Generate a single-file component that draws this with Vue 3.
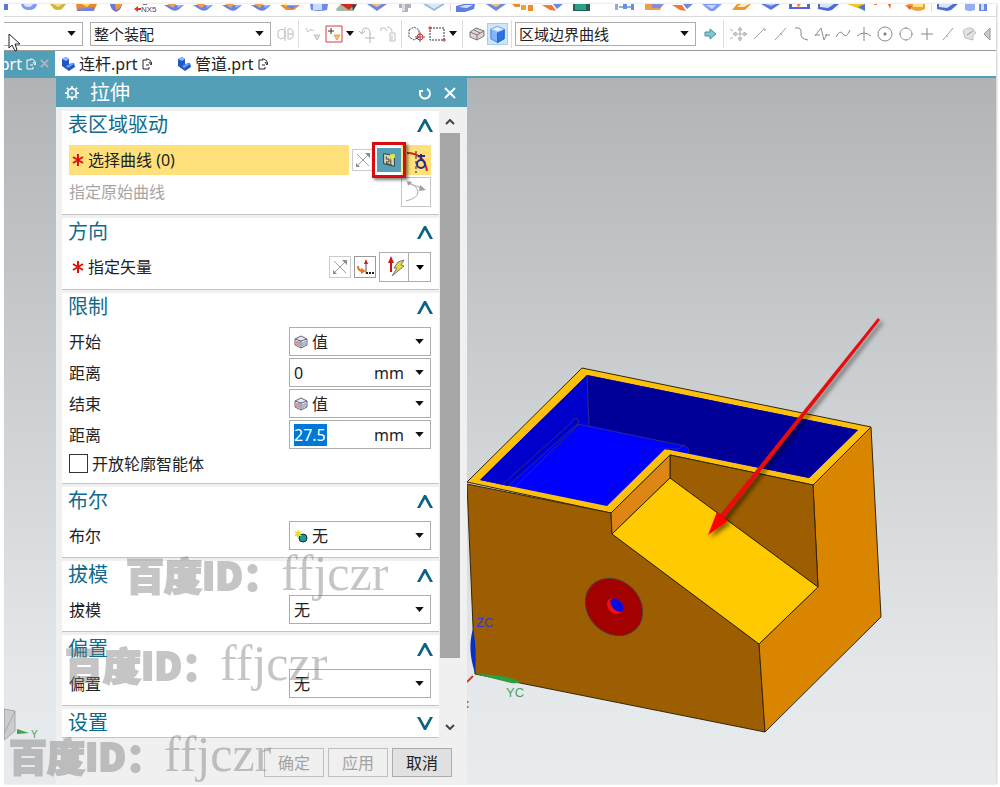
<template>
  <div class="app">
    <div class="ribbon">
      <template v-for="(icon, i) in ribbon" :key="i">
        <span v-if="icon === 'sep'" class="ribbon-sep"></span>
        <span v-else-if="icon === 'gap'" class="ribbon-gap"></span>
        <svg v-else class="ribbon-icon" :class="{ first: i === 0 }" viewBox="0 0 29 12" preserveAspectRatio="xMinYMin slice">
          <path v-for="(p, k) in ribbonShapes[icon]" :key="k" :d="p[0]" :fill="p[1]" />
          <text v-if="icon === 'nx'" x="11" y="8" class="nx-text">NX5</text>
        </svg>
      </template>
    </div>

    <div class="toolbar">
      <div class="combo filter cut">
        <select aria-label="过滤器"><option></option></select>
        <svg class="caret" viewBox="0 0 10 6"><path d="M0 0h10l-5 6z" /></svg>
      </div>
      <div class="combo filter wide">
        <select v-model="scope" aria-label="选择范围"><option>整个装配</option></select>
        <svg class="caret" viewBox="0 0 10 6"><path d="M0 0h10l-5 6z" /></svg>
      </div>
      <template v-for="(t, i) in selectTools" :key="i">
        <span v-if="t === 'sep'" class="tool-sep"></span>
        <button v-else-if="t === 'caret'" class="tool caret-btn" aria-label="更多">
          <svg viewBox="0 0 8 5"><path d="M0 0h8l-4 5z" fill="#111" /></svg>
        </button>
        <button v-else class="tool" :class="{ active: t === 'shaded' }" :aria-label="t">
          <svg viewBox="0 0 20 20">
            <path v-for="(p, k) in toolShapes[t]" :key="k" :d="p[0]" :stroke="p[1]" :fill="p[2] || 'none'" :stroke-dasharray="p[3]" />
          </svg>
        </button>
      </template>
      <div class="combo filter wide">
        <select v-model="curveRule" aria-label="曲线规则"><option>区域边界曲线</option></select>
        <svg class="caret" viewBox="0 0 10 6"><path d="M0 0h10l-5 6z" /></svg>
      </div>
      <template v-for="(t, i) in snapTools" :key="i">
        <span v-if="t === 'sep'" class="tool-sep"></span>
        <button v-else class="tool" :aria-label="t">
          <svg viewBox="0 0 20 20">
            <path v-for="(p, k) in toolShapes[t]" :key="k" :d="p[0]" :stroke="p[1]" :fill="p[2] || 'none'" />
          </svg>
        </button>
      </template>
    </div>

    <nav class="tabs">
      <a href="#" class="tab current">
        <span>prt</span>
        <svg class="edit" viewBox="0 0 10 12"><path d="M5 2H1v9h6V9" /><path d="M4 1q5 0 5 4M7 4l2 3 1-3M4 7h3" /></svg>
        <svg class="close" viewBox="0 0 10 10"><path d="M1 1l8 8M9 1l-8 8" /></svg>
      </a>
      <a v-for="name in parts" :key="name" href="#" class="tab">
        <svg class="part" viewBox="0 0 14 14">
          <path d="M1 2l4-2 3 2v5l5-1 1 4-6 4-7-5z" fill="#1d57c8" />
          <path d="M1 2l4-2 3 2-3 2z" fill="#8fb9ff" />
          <path d="M5 9l6-3 2 1-6 4z" fill="#6ea0f6" />
        </svg>
        <span>{{ name }}</span>
        <svg class="edit" viewBox="0 0 10 12"><path d="M5 2H1v9h6V9" /><path d="M4 1q5 0 5 4M7 4l2 3 1-3M4 7h3" /></svg>
      </a>
    </nav>

    <main class="workspace">
      <div class="side">
        <svg viewBox="0 0 52 80">
          <path d="M0 5l11 2v20L0 36z" fill="#c9cdd0" stroke="#a3a7aa" />
          <path d="M0 30L11 7M0 5v31" stroke="#a3a7aa" fill="none" />
          <path d="M13 25l12 4-12 1z" fill="#3fa34a" />
          <text x="27" y="34" class="axis green small">Y</text>
        </svg>
      </div>

      <section class="dialog">
        <header class="title-bar">
          <svg class="gear" viewBox="0 0 16 16">
            <circle cx="8" cy="8" r="5" fill="none" stroke="#fff" stroke-width="2" />
            <circle cx="8" cy="8" r="1" fill="#fff" />
            <path d="M8 0v3M8 13v3M0 8h3M13 8h3M2 2l2 2M12 12l2 2M14 2l-2 2M4 12l-2 2" stroke="#fff" stroke-width="2" />
          </svg>
          <h1>拉伸</h1>
          <button aria-label="重置">
            <svg viewBox="0 0 14 14"><path d="M2 5v2a5 5 0 1 0 7-4M1 5h4" /></svg>
          </button>
          <button aria-label="关闭">
            <svg viewBox="0 0 14 14"><path d="M2 2l10 10M12 2L2 12" /></svg>
          </button>
        </header>

        <div class="content">
          <div class="groups">
            <div v-for="g in groups" :key="g.title" class="group">
              <button class="group-head" @click="g.open = !g.open">
                <span>{{ g.title }}</span>
                <svg :class="{ down: !g.open }" viewBox="0 0 16 13"><path d="M0 13L7 0h2l7 13h-3L8 4 3 13z" /></svg>
              </button>

              <div v-if="g.open" class="group-body">
                <template v-if="g.kind === 'section'">
                  <div class="row tall">
                    <span class="required-label lit">
                      <svg class="star" viewBox="0 0 12 12"><path d="M6 0v12M1 3l10 6M11 3L1 9" /></svg>
                      选择曲线 (0)
                    </span>
                    <button class="mini plain" aria-label="反向"><svg viewBox="0 0 20 20"><path d="M4 4l12 12M16 4L4 16" stroke="#a0a0a0" fill="none" /><path d="M17 3v5l-5-5zM3 17v-4l4 4z" fill="#8c8c8c" /></svg></button>
                    <div class="pair">
                      <button class="sketch" aria-label="绘制截面">
                        <svg viewBox="0 0 20 20">
                          <path d="M4 3l12 2v12L4 14z" fill="#d8d6b0" stroke="#333" />
                          <path d="M7 6v3h3v3H7M12 8v6M7 12v2l6 1" fill="none" stroke="#333" />
                          <path d="M11 4l5-1 1 4-5 3z" fill="#e3e83e" />
                        </svg>
                      </button>
                      <button class="curve lit" aria-label="曲线">
                        <svg viewBox="0 0 28 28">
                          <path d="M5 7q17 0 20 18" fill="none" stroke="#d32020" stroke-width="2" />
                          <path d="M14 5v22" stroke="#222" stroke-dasharray="3 2" />
                          <circle cx="19" cy="18" r="4" fill="none" stroke="#2b2b8c" stroke-width="2" />
                          <path d="M19 8v7M16 10h7" stroke="#2b2b8c" stroke-width="2" />
                        </svg>
                      </button>
                    </div>
                  </div>
                  <div class="row tall">
                    <span class="label muted">指定原始曲线</span>
                    <button class="curve framed" aria-label="原始曲线">
                      <svg viewBox="0 0 28 28">
                        <path d="M4 23q12-3 12-9Q15 7 6 5M6 5l16 6" fill="none" stroke="#b3a8a8" />
                        <path d="M18 7l6 5-7 1z" fill="#a89c9c" />
                        <path d="M5 3l5 1-4 4z" fill="#a89c9c" />
                      </svg>
                    </button>
                  </div>
                </template>

                <div v-else-if="g.kind === 'direction'" class="row tall">
                  <span class="required-label">
                    <svg class="star" viewBox="0 0 12 12"><path d="M6 0v12M1 3l10 6M11 3L1 9" /></svg>
                    指定矢量
                  </span>
                  <button class="mini plain" aria-label="反向"><svg viewBox="0 0 20 20"><path d="M4 4l12 12M16 4L4 16" stroke="#a0a0a0" fill="none" /><path d="M17 3v5l-5-5zM3 17v-4l4 4z" fill="#8c8c8c" /></svg></button>
                  <button class="mini" aria-label="矢量对话框">
                    <svg viewBox="0 0 20 20">
                      <path d="M11 16V5" stroke="#555" fill="none" />
                      <path d="M9 7l2-5 2 5z" fill="#d81818" />
                      <path d="M3 9q0 5 5 5" fill="none" stroke="#e9751e" stroke-width="2" />
                      <path d="M6 11l5 3-5 3z" fill="#e9751e" />
                      <path d="M11 16h2M14 16h2M17 16h2" stroke="#222" stroke-width="2" />
                    </svg>
                  </button>
                  <div class="split">
                    <button aria-label="自动判断的矢量">
                      <svg viewBox="0 0 28 28">
                        <path d="M11 19V8" stroke="#d01212" stroke-width="2" />
                        <path d="M8 10l3-7 3 7z" fill="#d01212" />
                        <path d="M18 9l6-2-3 5 3 1-12 10 5-8-3 0z" fill="#e6da3c" stroke="#777" />
                      </svg>
                    </button>
                    <button aria-label="矢量类型"><svg class="arrow" viewBox="0 0 8 5"><path d="M0 0h8l-4 5z" /></svg></button>
                  </div>
                </div>

                <template v-else-if="g.kind === 'limits'">
                  <template v-for="l in limits" :key="l.id">
                    <div class="row">
                      <label class="label" :for="l.id">{{ l.name }}</label>
                      <div class="combo with-icon">
                        <select :id="l.id" v-model="l.type"><option>值</option></select>
                        <svg class="combo-icon" viewBox="0 0 14 14">
                          <path d="M1 4l6-3 6 3v6l-6 3-6-3z" fill="#e6e9f2" stroke="#667" />
                          <path d="M1 4l6 2 6-2M7 6v7" fill="none" stroke="#667" />
                          <path d="M3 6v4M5 6v5" stroke="#d24545" />
                          <path d="M9 7v4M11 6v4" stroke="#6f86c9" />
                        </svg>
                        <svg class="caret" viewBox="0 0 10 6"><path d="M0 0h10l-5 6z" /></svg>
                      </div>
                    </div>
                    <div class="row">
                      <label class="label" :for="l.id + '-dist'">距离</label>
                      <div class="measure">
                        <input :id="l.id + '-dist'" v-model="l.distance" type="text" :class="{ picked: l.picked }" />
                        <div class="combo unit">
                          <select v-model="l.unit" aria-label="单位"><option>mm</option></select>
                          <svg class="caret" viewBox="0 0 10 6"><path d="M0 0h10l-5 6z" /></svg>
                        </div>
                      </div>
                    </div>
                  </template>
                  <label class="check"><input v-model="openProfile" type="checkbox" />开放轮廓智能体</label>
                </template>

                <div v-else class="row">
                  <label class="label" :for="g.kind">{{ g.title }}</label>
                  <div class="combo" :class="{ 'with-icon': g.kind === 'boolean' }">
                    <select :id="g.kind" v-model="g.value"><option>无</option></select>
                    <svg v-if="g.kind === 'boolean'" class="combo-icon" viewBox="0 0 14 14">
                      <circle cx="9" cy="9" r="4" fill="#19a08c" stroke="#124" />
                      <path d="M4 0l1 3 3-1-2 3 2 2-3 0-1 3-1-3-3 0 2-2-2-3 3 1z" fill="#e8e020" />
                    </svg>
                    <svg class="caret" viewBox="0 0 10 6"><path d="M0 0h10l-5 6z" /></svg>
                  </div>
                </div>
              </div>
            </div>
          </div>

          <div class="scroll">
            <svg viewBox="0 0 10 6"><path d="M1 5l4-4 4 4" /></svg>
            <div class="track"><div class="thumb"></div></div>
            <svg viewBox="0 0 10 6"><path d="M1 1l4 4 4-4" /></svg>
          </div>
        </div>

        <footer class="actions">
          <button disabled>确定</button>
          <button disabled>应用</button>
          <button class="cancel">取消</button>
        </footer>
      </section>

      <div class="scene">
        <svg viewBox="467 78 529 706">
          <defs>
            <filter id="shade" x="-20%" y="-20%" width="140%" height="140%">
              <feDropShadow dx="3" dy="3" stdDeviation="2" flood-opacity=".5" />
            </filter>
          </defs>
          <g stroke="#33260a" stroke-width="1" stroke-linejoin="round">
            <path d="M467 482L582 368 871 427 813 485 670 455 611 513z" fill="#fdc00c" />
            <path d="M467 484L611 513 612 534 759 644 765 732 475 674z" fill="#9c5e00" />
            <path d="M813 485L871 427 881 617 765 732 759 644 818 587z" fill="#d98500" />
            <path d="M670 455L813 485 818 587 670 478z" fill="#9c5e00" />
            <path d="M611 513L670 455V478L612 534z" fill="#dd8614" />
            <path d="M612 534L670 478 818 587 759 644z" fill="#ffca00" />
          </g>
          <path d="M480 480L587 375 858 430 809 478 665 449 607 506z" fill="#00f" />
          <path d="M480 480L587 375 589 425 577 424 508 486z" fill="#0000cd" />
          <path d="M587 375L858 430 809 478 688 453 687 447 589 425z" fill="#000099" />
          <path d="M587 375l2 50M508 486l69-62 108 22q5 2 3 7M503 484l68-61q5-9 8-1l-2 4-62 61M665 449h13l7-4" fill="none" stroke="#2a2a8c" />
          <ellipse cx="614" cy="607" rx="31" ry="26" transform="rotate(45 614 607)" fill="#a30000" stroke="#4d3a3a" />
          <ellipse cx="615" cy="606" rx="9" ry="7" transform="rotate(45 615 606)" fill="#f01010" />
          <ellipse cx="617" cy="605" rx="8" ry="5" transform="rotate(45 617 605)" fill="#0a0ae0" />
          <path d="M473 629q-6 20 2 44 2-26-2-44z" fill="#0a2fc0" />
          <path d="M475 674l36 9q6 1 10-1-16-8-46-8z" fill="#2f9c3e" />
          <path d="M467 682l6-6" stroke="#d83a2c" stroke-width="2" />
          <path d="M467 701v2M467 706v2" stroke="#c06060" stroke-width="3" />
          <text x="476" y="627" class="axis blue">ZC</text>
          <text x="506" y="697" class="axis green">YC</text>
          <g filter="url(#shade)" fill="#e60b0b">
            <path d="M878 318l2 2L724 518l-4-3z" />
            <path d="M708 535l9-23 11 9z" fill="#f00" />
          </g>
        </svg>
      </div>
    </main>

    <div v-for="n in 3" :key="n" class="watermark" :class="'mark-' + n">
      <span class="heavy">百度ID：</span><span class="serif">ffjczr</span>
    </div>
    <svg class="pointer" viewBox="0 0 13 19"><path d="M1 1v14l3-3 3 6 2-1-2-6h5z" /></svg>
  </div>
</template>

<script setup>
import { ref, reactive } from 'vue'

const scope = ref('整个装配')
const curveRule = ref('区域边界曲线')
const openProfile = ref(false)
const parts = ['连杆.prt', '管道.prt']

const groups = reactive([
  { title: '表区域驱动', kind: 'section', open: true },
  { title: '方向', kind: 'direction', open: true },
  { title: '限制', kind: 'limits', open: true },
  { title: '布尔', kind: 'boolean', open: true, value: '无' },
  { title: '拔模', kind: 'draft', open: true, value: '无' },
  { title: '偏置', kind: 'offset', open: true, value: '无' },
  { title: '设置', kind: 'settings', open: false, value: '无' }
])

const limits = reactive([
  { id: 'start', name: '开始', type: '值', distance: '0', unit: 'mm', picked: false },
  { id: 'end', name: '结束', type: '值', distance: '27.5', unit: 'mm', picked: true }
])

const ribbon = [
  'edge', 'pill', 'gold', 'plate', 'ball', 'nx', 'vee', 'vee', 'vee', 'vee', 'warm', 'drum', 'cut', 'sheet', 'bolt', 'pale',
  'sep', 'block', 'sheet', 'dots', 'swirl', 'green',
  'gap', 'bars', 'plate2', 'swirl', 'fold', 'gold2', 'veeb', 'tray', 'sheet2', 'prism', 'spark', 'warm2',
  'sep', 'sheet2', 'pair'
]

// bottom halves of the ribbon icons: [path, fill]
const ribbonShapes = {
  edge: [['M0 0h4v6h-4z', '#5d78dc']],
  pill: [['M7 0h16q-1 6-8 6t-8-6z', '#7f9cf0'], ['M10 0h9q-1 3-5 3t-4-3z', '#dbe6ff']],
  gold: [['M7 0h16l-4 5q-4 2-8 0z', '#cdb73a'], ['M10 0h10l-5 3z', '#eee08a']],
  plate: [['M4 0h21l-3 7H5z', '#e58a34'], ['M5 5l17-2v4H5z', '#6f86e8'], ['M10 0h8l-3 3z', '#ffd65a']],
  ball: [['M9 0h12q0 5-6 8-6-3-6-8z', '#6b76d8'], ['M14 0h7q-1 4-6 6z', '#f09a3a']],
  nx: [['M4 5l4-3v2h3v2H8v2z', '#dc3a1f'], ['M13 0h4v1h-4z', '#777']],
  vee: [['M5 1h20l-6 5q-4 2-8-1z', '#6a83e6'], ['M8 0h9l-3 4z', '#f2a14a'], ['M18 1h6l-5 3z', '#9db5fa']],
  warm: [['M5 1h20l-6 5h-8z', '#f08c30'], ['M11 2h10l-4 3z', '#6c83e8'], ['M6 0h6v2z', '#ffe27a']],
  drum: [['M6 0h18l-1 6q-8 2-16 0z', '#6d8ae8'], ['M9 0h9v6H9z', '#cbdcff']],
  cut: [['M3 5L8 0h16l-4 7H4z', '#a9b8a0'], ['M7 0h15l-6 6z', '#d22c22'], ['M19 1l5-1-4 7z', '#344']],
  sheet: [['M5 0h20l-10 7z', '#6d8ae0'], ['M9 0h11l-5 3z', '#f2c08a']],
  bolt: [['M8 0h12v4h-3v4h-6V4H8z', '#aeb0bb'], ['M11 0h3v7h-3z', '#dcdde3']],
  pale: [['M3 0h22L14 7z', '#8fb5dd'], ['M6 0h16l-8 5z', '#d9e8f5']],
  block: [['M4 2l8-2h11l-1 5-9 3H4z', '#5f7de6'], ['M7 3l6-2h8l-6 3z', '#d5e0ff']],
  dots: [['M2 0h8v3H5z', '#f08c30'], ['M11 1h5v5h-5z', '#f0a030'], ['M18 1h5v6h-5z', '#ef8e2c']],
  swirl: [['M3 1h10l4 6-6-1z', '#ee7a34'], ['M14 0h10l-6 5z', '#6c86e6']],
  green: [['M5 0h17v7H5z', '#245f52'], ['M7 0h11v6H7z', '#28a287']],
  bars: [['M4 0h3v6H4zM8 2h12v2H8z', '#8ab0e6'], ['M12 0h4v5h-4zM20 0h3v6h-3z', '#6c8ee2']],
  plate2: [['M5 0h18l-3 6H5z', '#f19a4a'], ['M12 0h12l-4 4h-8z', '#7f8fe0']],
  fold: [['M4 0h20l-8 7h-4z', '#7e9cec'], ['M8 1h10l-4 4z', '#c7d7ff']],
  gold2: [['M5 6l5-6h14l-6 6z', '#ef9a22'], ['M10 3l4-3h8l-5 3z', '#fff1cc']],
  veeb: [['M5 0h19L15 6z', '#5d74e2'], ['M9 0h11l-5 2z', '#b5c5ff']],
  tray: [['M4 0h3v3h15V0h3v5H4z', '#5a62dc'], ['M12 0h4l-3 4z', '#ef8060']],
  sheet2: [['M4 0h21l-7 6-4 1-10-2z', '#4d6bd2'], ['M6 0h14l-6 4-8-1z', '#d5e6f6']],
  prism: [['M4 0h18v7z', '#f2c52c'], ['M15 3l7-3v7z', '#4f78d4']],
  spark: [['M2 0h3v1H2z', '#ef7a50'], ['M16 0h3l-1 5z', '#e06a2c']],
  warm2: [['M6 0h18v5q-7 4-14 0z', '#efa335'], ['M12 0h10v3H12z', '#ffe28a'], ['M4 1l7 1-2 4z', '#e8642c']],
  pair: [['M3 0h10v6q-5 2-10 0z', '#96aef2'], ['M17 0h8v7h-8z', '#6c88e6'], ['M19 0h3v6h-3z', '#d5e0ff']]
}

const selectTools = [
  'assembly', 'sep', 'reset', 'plus', 'caret', 'undo', 'list',
  'sep', 'locate', 'marquee', 'caret', 'sep', 'wire', 'shaded', 'sep'
]
const snapTools = [
  'next', 'sep', 'move', 'endpoint', 'midpoint', 'control', 'pole', 'spline',
  'intersect', 'center', 'quadrant', 'point', 'oncurve', 'face', 'more'
]

// [path, stroke, fill, dash]
const toolShapes = {
  assembly: [['M3 7l4-2 3 2v6l-4 2-3-2zM10 3v14', '#bdbdbd'], ['M13 5h3l2 2v6l-2 2h-3zM13 10h5', '#bdbdbd']],
  reset: [['M3 4l2 4 3-3M5 8q3-4 6-1', '#c4c4c4'], ['M11 11h6l-3 5z', '#c4c4c4', '#ddd']],
  plus: [['M2 2h16v16H2z', '#d83b3b'], ['M4 7h6M7 4v6', '#333'], ['M10 11h6l-3 5z', '#f0a050', '#f6bc6a']],
  undo: [['M2 7l3 3 3-3M5 9q0-5 4-5t4 6M8 14h10M13 9v10', '#b5b5b5']],
  list: [['M3 4h4l2 3M3 4v3M12 9h5v8h-5zM9 3q5 0 5 5M14 11v5', '#bdbdbd']],
  locate: [['M3 6l5-3 5 3v7l-5 3-5-3z', '#444', 'none', '2 1'], ['M14 8v10M9 13h10M11 13a3 3 0 1 0 6 0a3 3 0 1 0-6 0', '#c23a3a']],
  marquee: [['M3 4h14v12H3z', '#333', 'none', '2 1'], ['M2 3h2v2H2zM16 15h2v2h-2z', '#d04040']],
  wire: [['M3 8l6-4 8 3v5l-7 4-7-3z', '#777', '#ded9d9'], ['M3 8l7 3 7-4M10 11v5M7 6l6 3', '#8b6d6d']],
  shaded: [['M3 5l7-3 7 3v10l-7 4-7-4z', '#3f7fdd', '#83b4ff'], ['M10 8l7-3v10l-7 4z', '#2562c4', '#2c72e0'], ['M3 5l7-3 7 3-7 3z', '#8ab8f5', '#e3f0ff']],
  next: [['M5 8h5V5l6 5-6 5v-3H5z', '#4e8c9e', '#7fc8d8']],
  move: [['M12 4v12M6 10h12M12 3l-2 3h4zM12 17l-2-3h4zM19 10l-3-2v4zM5 10l3-2v4zM2 5l3 2M2 15l3-2', '#b0b0b0']],
  endpoint: [['M5 15L15 5M14 5h2v2', '#a0a0a0']],
  midpoint: [['M5 16L16 4M10 9l2 2', '#a0a0a0']],
  control: [['M4 4q7-1 6 5t7 7', '#888']],
  pole: [['M3 12L9 4l3 12 3-6M3 11h5M13 11h5', '#8c8c8c']],
  spline: [['M3 13q4-8 7-3t7-4', '#888']],
  intersect: [['M10 3v14M3 12q7-6 14 0', '#888']],
  center: [['M3 10a7 7 0 1 0 14 0a7 7 0 1 0-14 0', '#888'], ['M9 9h2v2H9z', '#888', '#888']],
  quadrant: [['M4 10a6 6 0 1 0 12 0a6 6 0 1 0-12 0M10 3v2M10 15v2M3 10h2M15 10h2', '#999']],
  point: [['M10 4v12M4 10h12', '#888']],
  oncurve: [['M5 16L15 4M8 11l2 2', '#a0a0a0']],
  face: [['M4 7q5-5 10-2l3 4q-4 2-3 7l-8-2z', '#c0c0c0', '#e2e2e2'], ['M8 11l6-4', '#999']],
  more: [['M10 4v12l-6-6z', '#999', '#ccc']]
}
</script>

<style>
body {
  background-color: #fff;
}
</style>

<style scoped>
.app {
  position: relative;
  margin: 4px 4px 3px;
  overflow: hidden;
  font-family: "Noto Sans", "Noto Sans CJK SC", sans-serif;
  font-size: 16px;
  line-height: 20px;
  color: #222;
  background-color: #fff;
  box-shadow: 1px 0 2px #ccc;
}

button,
select,
input {
  font: inherit;
  color: inherit;
  margin: 0;
  padding: 0;
  border: none;
  background: none;
}

/* ribbon */
.ribbon {
  display: flex;
  height: 12px;
  overflow: hidden;
  border-bottom: 1px solid #dadada;
}

.ribbon-icon {
  flex: none;
  width: 29px;
  height: 12px;
}

.ribbon-icon.first {
  width: 10px;
}

.ribbon-sep {
  flex: none;
  width: 1px;
  height: 8px;
  margin: 0 1px;
  background-color: #ddd;
}

.ribbon-gap {
  flex: none;
  width: 14px;
}

.nx-text {
  font-family: "Liberation Sans", sans-serif;
  font-size: 8px;
  fill: #445;
}

/* selection toolbar */
.toolbar {
  display: flex;
  align-items: center;
  height: 33px;
  overflow: hidden;
  border-bottom: 1px solid #999;
}

.combo {
  display: grid;
  align-items: center;
  box-sizing: border-box;
  flex: none;
  width: 142px;
  height: 29px;
  border: 1px solid #adadad;
  background-color: #fff;
}

.combo > * {
  grid-area: 1 / 1;
}

.combo select {
  width: 100%;
  height: 100%;
  padding-left: 4px;
  appearance: none;
}

.combo.with-icon select {
  padding-left: 22px;
}

.combo-icon {
  width: 14px;
  height: 14px;
  margin-left: 4px;
  pointer-events: none;
}

.caret {
  justify-self: end;
  width: 9px;
  height: 5px;
  margin-right: 6px;
  fill: #111;
  pointer-events: none;
}

.combo.filter {
  height: 24px;
  font-size: 15px;
}

.combo.filter select {
  padding-left: 3px;
}

.combo.cut {
  width: 79px;
  margin-right: 7px;
  border-left: none;
}

.combo.wide {
  width: 181px;
  margin-right: 3px;
}

.tool {
  display: flex;
  flex: none;
  align-items: center;
  justify-content: center;
  box-sizing: border-box;
  width: 21px;
  height: 22px;
}

.tool svg {
  width: 20px;
  height: 20px;
}

.tool.active {
  background-color: #cfe6f5;
  border: 1px solid #a4cfe4;
}

.tool.caret-btn {
  width: 12px;
}

.tool.caret-btn svg {
  width: 8px;
  height: 5px;
}

.tool-sep {
  flex: none;
  width: 1px;
  height: 28px;
  margin: 0 3px;
  background-color: #ddd;
}

/* part tabs */
.tabs {
  display: flex;
  height: 25px;
  border-bottom: 2px solid #539fb8;
}

.tab {
  display: flex;
  align-items: center;
  gap: 4px;
  width: 110px;
  padding-left: 6px;
  color: #222;
  text-decoration: none;
}

.tab.current {
  justify-content: flex-end;
  box-sizing: border-box;
  width: 51px;
  padding: 0 6px 0 0;
  overflow: hidden;
  color: #fff;
  background-color: #539fb8;
}

.tab svg {
  flex: none;
  fill: none;
  stroke: currentColor;
}

.tab .part {
  width: 14px;
  height: 14px;
  stroke: none;
}

.tab .edit {
  width: 10px;
  height: 12px;
}

.tab .close {
  width: 9px;
  height: 9px;
  stroke: #a9b9bf;
  stroke-width: 2;
}

/* workspace */
.workspace {
  display: flex;
  background: linear-gradient(#b0b4b7, #cdd0d2 45%, #e4e8ea 85%, #e8ebed);
}

.side {
  display: flex;
  flex: none;
  align-items: flex-end;
  width: 52px;
}

.side svg {
  width: 52px;
  height: 80px;
}

.scene {
  flex: 1;
  min-width: 0;
  overflow: hidden;
}

.scene svg {
  display: block;
  width: 529px;
  height: 706px;
}

.axis {
  font-family: "Liberation Sans", sans-serif;
  font-size: 13px;
}

.axis.small {
  font-size: 10px;
}

.axis.blue {
  fill: #3a35d8;
}

.axis.green {
  fill: #4aa35a;
}

/* dialog */
.dialog {
  display: flex;
  flex: none;
  flex-direction: column;
  width: 411px;
  background-color: #f0f0f0;
}

.title-bar {
  display: flex;
  align-items: center;
  gap: 11px;
  height: 29px;
  padding: 0 10px 0 9px;
  color: #fff;
  background-color: #539fb8;
}

.title-bar h1 {
  flex: 1;
  margin: 0;
  font-size: 20px;
  font-weight: 400;
  line-height: 28px;
}

.title-bar button {
  display: flex;
}

.title-bar button svg {
  width: 14px;
  height: 14px;
  fill: none;
  stroke: #fff;
  stroke-width: 2;
}

.gear {
  width: 14px;
  height: 14px;
}

.content {
  display: flex;
  padding: 4px 6px 0;
}

.groups {
  display: flex;
  flex: 1;
  flex-direction: column;
  gap: 3px;
}

.group {
  background-color: #fff;
  border-bottom: 1px solid #c4c4c4;
}

.group-head {
  display: flex;
  align-items: center;
  justify-content: space-between;
  width: 100%;
  height: 28px;
  padding: 0 6px;
  font-size: 20px;
  color: #0f6b8d;
}

.group-head svg {
  width: 16px;
  height: 13px;
  fill: #0b6383;
}

.group-head svg.down {
  transform: rotate(180deg);
}

.group-body {
  display: flex;
  flex-direction: column;
  gap: 2px;
  padding: 6px 8px 7px 7px;
}

.row {
  display: flex;
  align-items: center;
  gap: 3px;
  height: 29px;
}

.row.tall {
  height: 30px;
}

.label {
  flex: 1;
}

.label.muted {
  color: #a6a6a6;
}

.required-label {
  display: flex;
  flex: 1;
  align-items: center;
  gap: 4px;
  height: 30px;
  padding-left: 3px;
}

.lit {
  background-color: #ffe07a;
}

.star {
  width: 12px;
  height: 12px;
  stroke: #e01010;
  stroke-width: 2;
}

.mini,
.sketch,
.curve,
.split button {
  display: flex;
  flex: none;
  align-items: center;
  justify-content: center;
  box-sizing: border-box;
}

.mini {
  width: 22px;
  height: 22px;
  border: 1px solid #9a9a9a;
}

.mini.plain {
  border-color: #ccc;
}

.mini svg {
  width: 20px;
  height: 20px;
}

.pair {
  display: flex;
  align-items: center;
}

.sketch {
  position: relative;
  width: 24px;
  height: 24px;
  background-color: #539fb8;
}

.sketch svg {
  width: 18px;
  height: 18px;
}

/* callout frame round the sketch button */
.sketch::after {
  content: "";
  position: absolute;
  inset: -6px -5px;
  border: 3px solid #d90b10;
  box-shadow: 2px 2px 3px rgba(0, 0, 0, 0.5);
}

.curve {
  width: 30px;
  height: 30px;
}

.curve.framed {
  border: 1px solid #c4c4c4;
}

.curve svg,
.split svg {
  width: 28px;
  height: 28px;
}

.split {
  display: flex;
  box-sizing: border-box;
  width: 52px;
  height: 30px;
  border: 1px solid #adadad;
}

.split button {
  flex: 1;
}

.split button:first-child {
  flex: none;
  width: 29px;
  border-right: 1px solid #adadad;
}

.split .arrow {
  width: 8px;
  height: 5px;
}

.measure {
  display: flex;
  align-items: center;
  justify-content: space-between;
  box-sizing: border-box;
  width: 142px;
  height: 29px;
  padding-left: 4px;
  border: 1px solid #adadad;
}

.measure input {
  width: 33px;
  height: 22px;
}

.measure input.picked {
  color: #fff;
  background-color: #0078d7;
}

.combo.unit {
  width: 60px;
  height: 27px;
  border: none;
  background: none;
}

.check {
  display: flex;
  align-items: center;
  gap: 4px;
  height: 25px;
}

.check input {
  width: 19px;
  height: 19px;
  border: 1px solid #333;
  appearance: none;
}

.check input:checked {
  background-color: #539fb8;
}

.scroll {
  display: flex;
  flex-direction: column;
  align-items: center;
  justify-content: space-between;
  width: 22px;
}

.scroll > svg {
  width: 10px;
  height: 6px;
  padding: 8px 0;
  fill: none;
  stroke: #444;
  stroke-width: 2;
}

.track {
  flex: 1;
  width: 20px;
}

.thumb {
  height: 90%;
  background-color: #a6a6a6;
}

.actions {
  display: flex;
  justify-content: flex-end;
  gap: 4px;
  padding: 10px 15px 7px;
}

.actions button {
  width: 60px;
  height: 29px;
  border: 1px solid #bfbfbf;
  color: #a3a3a3;
}

.actions .cancel {
  color: #222;
  border-color: #adadad;
  background-color: #e1e1e1;
}

/* watermarks and pointer float over everything */
.watermark {
  position: absolute;
  display: flex;
  align-items: baseline;
  line-height: 60px;
  color: #777;
  opacity: 0.42;
  pointer-events: none;
}

.watermark .heavy {
  font-family: "Noto Sans CJK SC", sans-serif;
  font-size: 38px;
  font-weight: 900;
  -webkit-text-stroke: 2px #777;
}

.watermark .serif {
  font-family: "Liberation Serif", serif;
  font-size: 50px;
}

.mark-1 {
  left: 122px;
  top: 539px;
}

.mark-2 {
  left: 61px;
  top: 629px;
}

.mark-3 {
  left: 5px;
  top: 720px;
}

.pointer {
  position: absolute;
  left: 4px;
  top: 29px;
  width: 13px;
  height: 19px;
  fill: #fff;
  stroke: #222;
}
</style>
